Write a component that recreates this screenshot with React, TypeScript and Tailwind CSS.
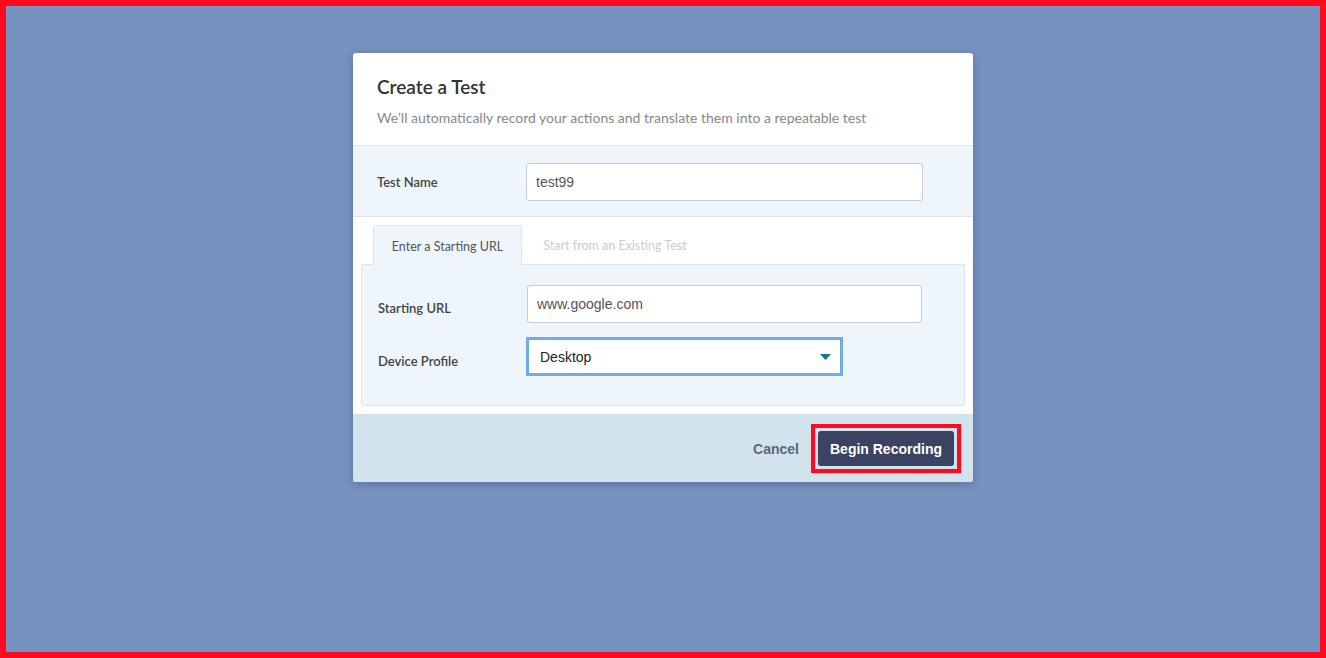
import { useState } from "react";

const ui = { fontFamily: '"Segoe UI", Lato, "Noto Sans", sans-serif' };
const arial = { fontFamily: '"Liberation Sans", Arial, sans-serif' };

export default function App() {
  const [name, setName] = useState("test99");
  const [url, setUrl] = useState("www.google.com");
  const [tab, setTab] = useState(0);

  return (
    <div className="h-[658px] w-full box-border border-[6px] border-[#ff0a1e] bg-[#7892c0] flex justify-center" style={ui}>
      <div className="mt-[47px] w-[620px] h-[429px] bg-white rounded-[3px] shadow-[0_2px_10px_rgba(40,50,90,0.35)] flex flex-col overflow-hidden">
        {/* header */}
        <div className="h-[93px] px-6 pt-[22px] border-b border-[#dde6ee]">
          <h2 className="text-[19px] leading-6 text-[#333] font-semibold">Create a Test</h2>
          <p className="mt-[9px] text-[14px] leading-5 text-[#888]">
            We’ll automatically record your actions and translate them into a repeatable test
          </p>
        </div>

        {/* name row */}
        <div className="h-[71px] bg-[#eef6fc] border-b border-[#dde6ee] flex items-center pl-6 pt-px">
          <label className="w-[149px] text-[13px] font-semibold text-[#444] pt-[3px]">Test Name</label>
          <input
            value={name}
            onChange={(e) => setName(e.target.value)}
            className="w-[397px] h-[38px] px-[9px] bg-white border border-[#c8ccd0] rounded-[3px] text-[14px] text-[#555] outline-none"
            style={arial}
          />
        </div>

        {/* tabs */}
        <div className="flex-1 px-2 pt-2 pb-[8px] flex flex-col">
          <div className="flex pl-3 h-[40px]">
            <button
              onClick={() => setTab(0)}
              className="w-[149px] h-[40px] pt-1 bg-[#eef6fc] border border-b-0 border-[#dde6ee] rounded-t-[3px] text-[12.5px] text-[#555] relative z-10"
            >
              Enter a Starting URL
            </button>
            <button
              onClick={() => setTab(1)}
              className="w-[186px] h-[40px] pt-1 text-[12.5px] text-[#ccc] bg-white border-b border-[#e6edf2]"
            >
              Start from an Existing Test
            </button>
          </div>
          <div className="-mt-px h-[142px] bg-[#eef6fc] border border-[#dde6ee] rounded-b-[3px] pl-4 pt-5">
            <div className="flex items-center h-[38px]">
              <label className="w-[149px] text-[13px] font-semibold text-[#444] pt-[10px]">Starting URL</label>
              <input
                value={url}
                onChange={(e) => setUrl(e.target.value)}
                className="w-[395px] h-[38px] px-[9px] bg-white border border-[#c8ccd0] rounded-[3px] text-[14px] text-[#555] outline-none"
                style={arial}
              />
            </div>
            <div className="flex items-center h-[39px] mt-[14px]">
              <label className="w-[148px] text-[13px] font-semibold text-[#444] pt-[10px]">Device Profile</label>
              <div
                className="w-[317px] h-[39px] bg-white border-[3px] border-[#70ace6] flex items-center justify-between pl-[11px] pr-[9px] text-[14px] text-[#222]"
                style={arial}
              >
                <span className="pt-px">Desktop</span>
                <svg width="11" height="6" viewBox="0 0 11 6">
                  <path d="M0 0h11L5.5 6z" fill="#1a6f96" />
                </svg>
              </div>
            </div>
          </div>
        </div>

        {/* footer */}
        <div className="h-[68px] bg-[#d3e3ee] flex items-center justify-end pr-[12px] gap-[12px]" style={arial}>
          <button className="text-[14px] font-bold text-[#5a6878] pt-0.5">Cancel</button>
          <div className="border-[4px] border-[#ff0a1e] p-[3px]">
            <button className="h-[35px] w-[136px] bg-[#3b4262] rounded-[3px] text-white text-[14px] font-bold pt-0.5">
              Begin Recording
            </button>
          </div>
        </div>
      </div>
    </div>
  );
}
